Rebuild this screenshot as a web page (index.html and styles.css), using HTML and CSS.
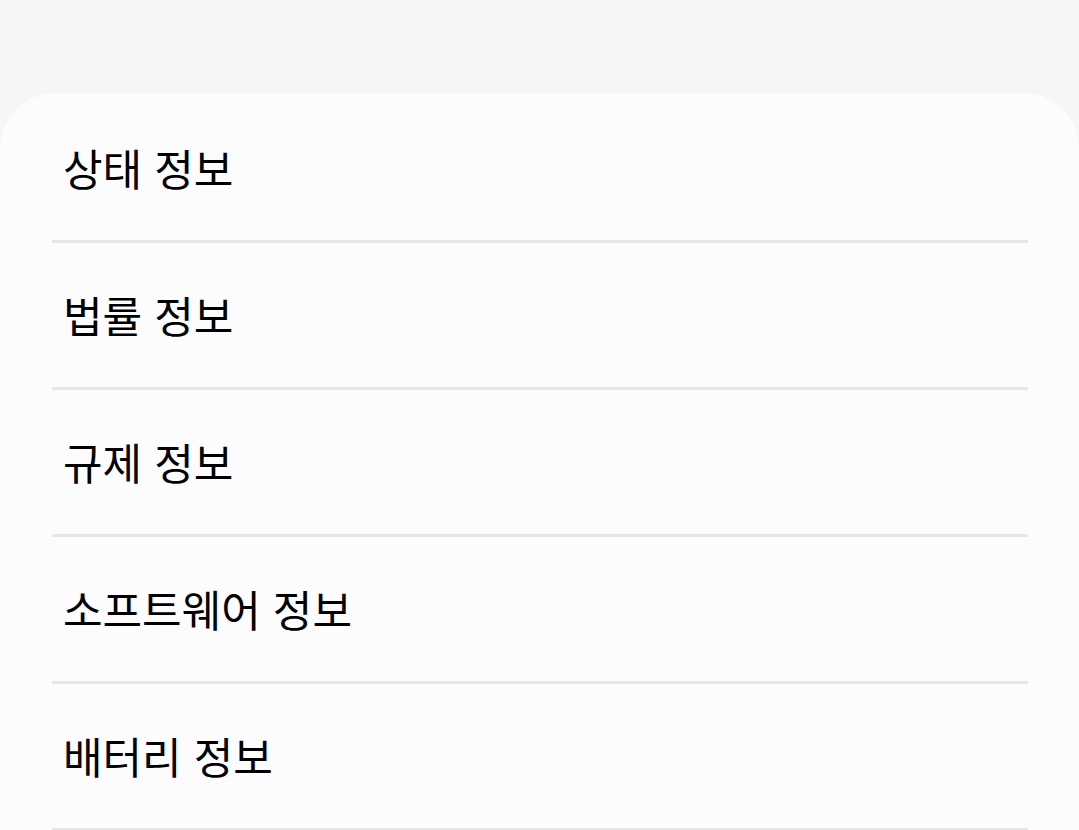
FILE: index.html
```html
<!DOCTYPE html>
<html lang="ko">
<head>
  <meta charset="UTF-8">
  <meta name="viewport" content="width=device-width, initial-scale=1.0">
  <title>휴대전화 정보</title>
  <link rel="stylesheet" href="styles.css">
</head>
<body>
  <div class="page">
    <ul class="card">
      <li class="item">상태 정보</li>
      <li class="item">법률 정보</li>
      <li class="item">규제 정보</li>
      <li class="item">소프트웨어 정보</li>
      <li class="item">배터리 정보</li>
    </ul>
  </div>
</body>
</html>
```

FILE: styles.css
```css
*{
  margin: 0;
  padding: 0;
  box-sizing: border-box;
}

body{
  background-color: #f6f6f6;
  font-family: "Noto Sans CJK KR", "Noto Sans", sans-serif;
  color: #000;
  overflow: hidden;
}

.page{
  padding-top: 93px;
}

.card{
  list-style: none;
  background-color: #fcfcfc;
  border-radius: 56px 56px 0 0;
  padding: 3px 51px 0 52px;
}

.item{
  height: 147px;
  display: flex;
  align-items: center;
  padding-left: 11px;
  padding-bottom: 3px;
  font-size: 43px;
  border-bottom: 3px solid #e6e6e6;
}
```
